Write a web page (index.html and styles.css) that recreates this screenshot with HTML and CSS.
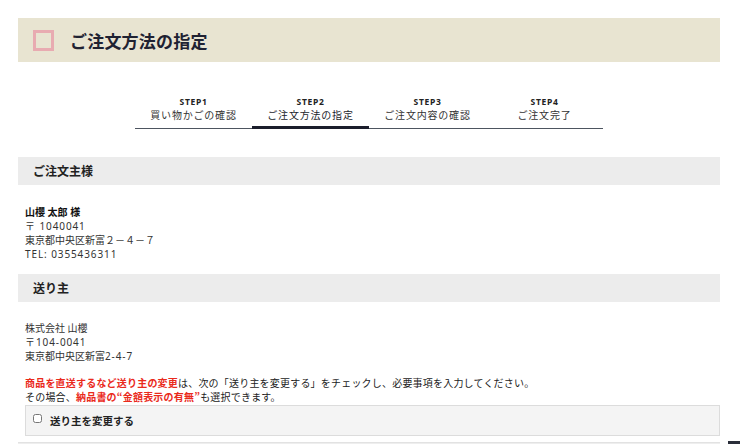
FILE: index.html
```html
<!DOCTYPE html>
<html lang="ja">
<head>
<meta charset="utf-8">
<link rel="stylesheet" href="styles.css">
</head>
<body>
<div class="page">
  <div class="page-head">
    <span class="head-mark"></span>
    <h1 class="head-title">ご注文方法の指定</h1>
  </div>

  <div class="steps">
    <div class="step"><span class="step-no">STEP1</span><span class="step-name">買い物かごの確認</span></div>
    <div class="step active"><span class="step-no">STEP2</span><span class="step-name">ご注文方法の指定</span></div>
    <div class="step"><span class="step-no">STEP3</span><span class="step-name">ご注文内容の確認</span></div>
    <div class="step"><span class="step-no">STEP4</span><span class="step-name">ご注文完了</span></div>
  </div>

  <h2 class="sec-head first">ご注文主様</h2>
  <div class="sec-body">
    <p class="addr"><b>山櫻 太郎 様</b><br><span class="num">〒 1040041</span><br>東京都中央区新富２－４－７<br><span class="num">TEL: 0355436311</span></p>
  </div>

  <h2 class="sec-head">送り主</h2>
  <div class="sec-body second">
    <p class="addr">株式会社 山櫻<br><span class="num">〒104-0041</span><br>東京都中央区新富<span class="num">2-4-7</span></p>
    <p class="note"><span class="red">商品を直送するなど送り主の変更</span>は、次の「送り主を変更する」をチェックし、必要事項を入力してください。<br>その場合、<span class="red">納品書の“金額表示の有無”</span>も選択できます。</p>
    <label class="change-box"><input type="checkbox" class="chk"><span>送り主を変更する</span></label>
  </div>
  <div class="next-strip"></div>
</div>
<div class="side-tab"></div>
</body>
</html>
```

FILE: styles.css
```css
* { box-sizing: border-box; }
html, body { margin: 0; padding: 0; background: #fff; }
body {
  font-family: "Noto Sans CJK JP", "Noto Sans", sans-serif;
  color: #333;
  font-size: 10px;
  overflow: hidden;
  height: 444px;
  position: relative;
}
.page { padding: 18px 20px 0 18px; }
.page-head {
  height: 44px;
  background: #e8e4d1;
  display: flex;
  align-items: center;
  padding-left: 15px;
}
.head-mark {
  width: 21px;
  height: 21px;
  border: 3px solid #e8abb1;
  margin-right: 16px;
  margin-top: 1px;
}
.head-title {
  margin: 0;
  font-size: 17px;
  font-weight: 700;
  color: #1f2232;
  letter-spacing: 0.2px;
}
.steps {
  width: 468px;
  margin: 34px auto 0;
  display: flex;
  border-bottom: 1px solid #4d5560;
  align-items: flex-end;
}
.step {
  flex: 1;
  display: flex;
  flex-direction: column;
  align-items: center;
  padding-bottom: 6px;
  color: #333;
}
.step.active {
  padding-bottom: 4px;
  border-bottom: 3px solid #1b1e2c;
  margin-bottom: -1px;
  color: #1b1e2c;
}
.step-no {
  font-family: "Noto Sans", sans-serif;
  font-weight: 700;
  font-size: 8.5px;
  line-height: 12px;
  letter-spacing: 0.7px;
  color: #222;
}
.step-name {
  font-size: 10px;
  line-height: 14px;
  letter-spacing: 0.8px;
}
.sec-head {
  margin: 0;
  height: 28px;
  background: #ececec;
  padding-left: 15px;
  font-size: 12px;
  font-weight: 700;
  line-height: 28px;
  color: #222;
}
.sec-head.first { margin-top: 28px; }
.sec-body { padding: 20px 0 13px 7px; }
.sec-body.second { padding-top: 19px; padding-bottom: 0; }
.addr {
  margin: 0;
  font-family: "Noto Sans", "Noto Sans CJK JP", sans-serif;
  font-size: 10px;
  line-height: 14px;
  color: #333;
}
.addr .num { letter-spacing: 0.9px; }
.addr b { color: #111; font-weight: 700; font-size: 10px; }
.note {
  margin: 13px 0 0;
  font-size: 10px;
  line-height: 14px;
  color: #222;
  letter-spacing: 0.2px;
}
.red { color: #ea2a1c; font-weight: 700; }
.change-box {
  display: flex;
  align-items: center;
  height: 31px;
  margin-top: 1px;
  background: #f4f4f4;
  border: 1px solid #dcdcdc;
  padding-left: 7px;
  font-size: 10.5px;
  font-weight: 700;
  color: #222;
}
.chk {
  width: 9px;
  height: 9px;
  margin: 0 8px 4px 0;
}
.next-strip {
  margin-top: 6px;
  height: 4px;
  background: #eeeeee;
  border-top: 1px solid #e2e2e2;
}
.side-tab {
  position: absolute;
  right: 0;
  top: 441px;
  width: 12px;
  height: 6px;
  background: #2a2e3a;
}
```
